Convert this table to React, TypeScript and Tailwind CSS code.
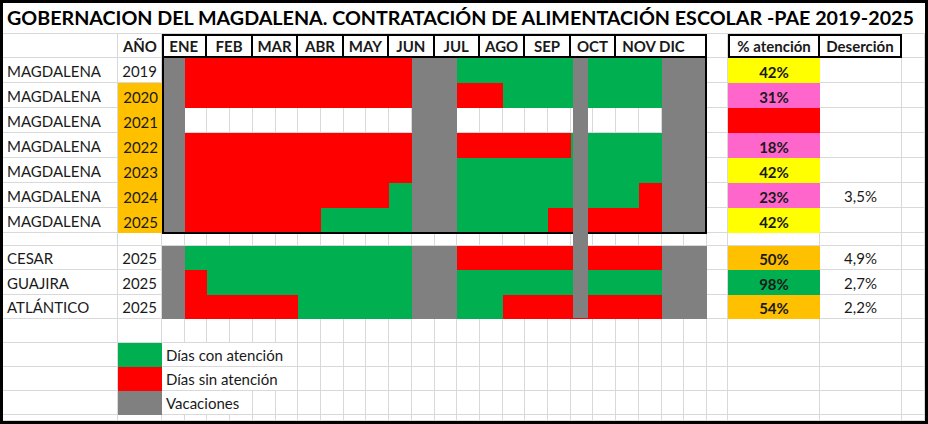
import React from "react";

type Fill = "v" | "r" | "g" | "w";

// expand [fill, count] pairs into the 24 half-month cells of a row
const seg = (...parts: [Fill, number][]): Fill[] =>
  parts.flatMap(([f, n]) => Array(n).fill(f) as Fill[]);

const LINE = "border-r border-b border-[#d9d9d9]";
const GRID = "grid grid-cols-[repeat(24,minmax(0,1fr))] w-[545px] shrink-0";

const fillClass: Record<Fill, string> = {
  v: "bg-[#808080]",
  r: "bg-[#ff0000]",
  g: "bg-[#00b050]",
  w: "bg-white border-r border-b border-[#d9d9d9]",
};

interface Row {
  name: string;
  year: string;
  orange: boolean;
  cells: Fill[];
  pct: string;
  pctBg: string;
  des?: string;
  h: string;
}

const YELLOW = "bg-[#ffff00]";
const PINK = "bg-[#ff66cc]";
const RED = "bg-[#ff0000]";
const ORANGE = "bg-[#ffc000]";
const GREEN = "bg-[#00b050]";

const magdalena: Row[] = [
  { name: "MAGDALENA", year: "2019", orange: false, cells: seg(["v", 1], ["r", 10], ["v", 2], ["g", 9], ["v", 2]), pct: "42%", pctBg: YELLOW, h: "h-[25px]" },
  { name: "MAGDALENA", year: "2020", orange: true, cells: seg(["v", 1], ["r", 10], ["v", 2], ["r", 2], ["g", 7], ["v", 2]), pct: "31%", pctBg: PINK, h: "h-[25px]" },
  { name: "MAGDALENA", year: "2021", orange: true, cells: seg(["v", 1], ["w", 10], ["v", 2], ["w", 9], ["v", 2]), pct: "", pctBg: RED, h: "h-[25px]" },
  { name: "MAGDALENA", year: "2022", orange: true, cells: seg(["v", 1], ["r", 10], ["v", 2], ["r", 5], ["g", 4], ["v", 2]), pct: "18%", pctBg: PINK, h: "h-[25px]" },
  { name: "MAGDALENA", year: "2023", orange: true, cells: seg(["v", 1], ["r", 10], ["v", 2], ["g", 9], ["v", 2]), pct: "42%", pctBg: YELLOW, h: "h-[25px]" },
  { name: "MAGDALENA", year: "2024", orange: true, cells: seg(["v", 1], ["r", 9], ["g", 1], ["v", 2], ["g", 8], ["r", 1], ["v", 2]), pct: "23%", pctBg: PINK, des: "3,5%", h: "h-[25px]" },
  { name: "MAGDALENA", year: "2025", orange: true, cells: seg(["v", 1], ["r", 6], ["g", 4], ["v", 2], ["g", 4], ["r", 5], ["v", 2]), pct: "42%", pctBg: YELLOW, h: "h-[25px]" },
];

const others: Row[] = [
  { name: "CESAR", year: "2025", orange: false, cells: seg(["v", 1], ["g", 10], ["v", 2], ["r", 9], ["v", 2]), pct: "50%", pctBg: ORANGE, des: "4,9%", h: "h-[24px]" },
  { name: "GUAJIRA", year: "2025", orange: false, cells: seg(["v", 1], ["r", 1], ["g", 9], ["v", 2], ["g", 9], ["v", 2]), pct: "98%", pctBg: GREEN, des: "2,7%", h: "h-[25px]" },
  { name: "ATLÁNTICO", year: "2025", orange: false, cells: seg(["v", 1], ["r", 5], ["g", 5], ["v", 2], ["g", 2], ["r", 7], ["v", 2]), pct: "54%", pctBg: ORANGE, des: "2,2%", h: "h-[24px]" },
];

const months = ["ENE", "FEB", "MAR", "ABR", "MAY", "JUN", "JUL", "AGO", "SEP", "OCT"];

function DataRow({ row }: { row: Row }) {
  return (
    <div className={`flex ${row.h}`}>
      <div className={`w-[115px] shrink-0 ${LINE} flex items-end pl-1 pb-[2px]`}>{row.name}</div>
      <div className={`w-[44px] shrink-0 flex items-end justify-end pr-1 pb-[2px] ${row.orange ? ORANGE : LINE}`}>
        {row.year}
      </div>
      <div className={GRID}>
        {row.cells.map((f, i) => (
          <div key={i} className={fillClass[f]} />
        ))}
      </div>
      <div className={`w-[21px] shrink-0 ${LINE}`} />
      <div className={`w-[92px] shrink-0 flex items-end justify-center pb-[2px] font-bold ${row.pctBg}`}>{row.pct}</div>
      <div className={`w-[82px] shrink-0 ${LINE} flex items-end justify-center pb-[2px]`}>{row.des}</div>
      <div className={`flex-1 ${LINE}`} />
    </div>
  );
}

function EmptyRow({ h, legend }: { h: string; legend?: { color: string; label: string; span: number } }) {
  const rest = legend ? 24 - legend.span : 24;
  return (
    <div className={`flex ${h}`}>
      <div className={`w-[115px] shrink-0 ${LINE}`} />
      <div className={`w-[44px] shrink-0 ${legend ? legend.color : LINE}`} />
      <div className={GRID}>
        {legend && (
          <div
            className={`${legend.span === 6 ? "col-span-6" : "col-span-4"} ${LINE} flex items-end pl-1 pb-[2px] whitespace-nowrap`}
          >
            {legend.label}
          </div>
        )}
        {Array.from({ length: rest }).map((_, i) => (
          <div key={i} className={LINE} />
        ))}
      </div>
      <div className={`w-[21px] shrink-0 ${LINE}`} />
      <div className={`w-[92px] shrink-0 ${LINE}`} />
      <div className={`w-[82px] shrink-0 ${LINE}`} />
      <div className={`flex-1 ${LINE}`} />
    </div>
  );
}

export default function App() {
  return (
    <div className="w-[928px] h-[424px] border-[3px] border-black bg-white overflow-hidden flex flex-col font-['Lato',sans-serif] text-[15px] leading-[18px] text-[#1a1a1a]">
      {/* title row */}
      <div className="h-[31px] shrink-0 border-b border-[#d9d9d9] flex items-end pl-1 pb-[3px] font-bold text-[19.7px] leading-[24px] text-black whitespace-nowrap">
        GOBERNACION DEL MAGDALENA. CONTRATACIÓN DE ALIMENTACIÓN ESCOLAR -PAE 2019-2025
      </div>

      <div className="relative flex-1 flex flex-col">
        {/* header row */}
        <div className="flex h-[24px]">
          <div className={`w-[115px] shrink-0 ${LINE}`} />
          <div className={`w-[44px] shrink-0 ${LINE} flex items-end justify-end pr-1 pb-[2px] font-bold`}>AÑO</div>
          <div className={`${GRID} border-b-2 border-black`}>
            {months.map((m) => (
              <div key={m} className="col-span-2 border-r-2 border-black flex items-end justify-center pb-[1px] font-bold">
                {m}
              </div>
            ))}
            <div className="col-span-4 flex items-end pl-1.5 pb-[1px] font-bold">NOV DIC</div>
          </div>
          <div className={`w-[21px] shrink-0 ${LINE}`} />
          <div className="w-[92px] shrink-0 border-2 border-black flex items-end justify-center pb-[1px] font-bold">
            % atención
          </div>
          <div className="w-[82px] shrink-0 border-2 border-l-0 border-black flex items-end justify-center pb-[1px] font-bold">
            Deserción
          </div>
          <div className={`flex-1 ${LINE}`} />
        </div>

        {magdalena.map((r) => (
          <DataRow key={r.year} row={r} />
        ))}

        <EmptyRow h="h-[13px]" />

        {others.map((r) => (
          <DataRow key={r.name} row={r} />
        ))}

        <EmptyRow h="h-[24px]" />
        <EmptyRow h="h-[24px]" legend={{ color: GREEN, label: "Días con atención", span: 6 }} />
        <EmptyRow h="h-[24px]" legend={{ color: RED, label: "Días sin atención", span: 6 }} />
        <EmptyRow h="h-[24px]" legend={{ color: "bg-[#808080]", label: "Vacaciones", span: 4 }} />
        <EmptyRow h="flex-1" />

        {/* thick frame round the Magdalena block */}
        <div className="absolute left-[159px] top-0 w-[545px] h-[200px] border-2 border-black pointer-events-none" />
        {/* October vacation strip, drawn across both groups */}
        <div className="absolute left-[570px] top-[24px] w-[15px] h-[260px] bg-[#808080]" />
      </div>
    </div>
  );
}
